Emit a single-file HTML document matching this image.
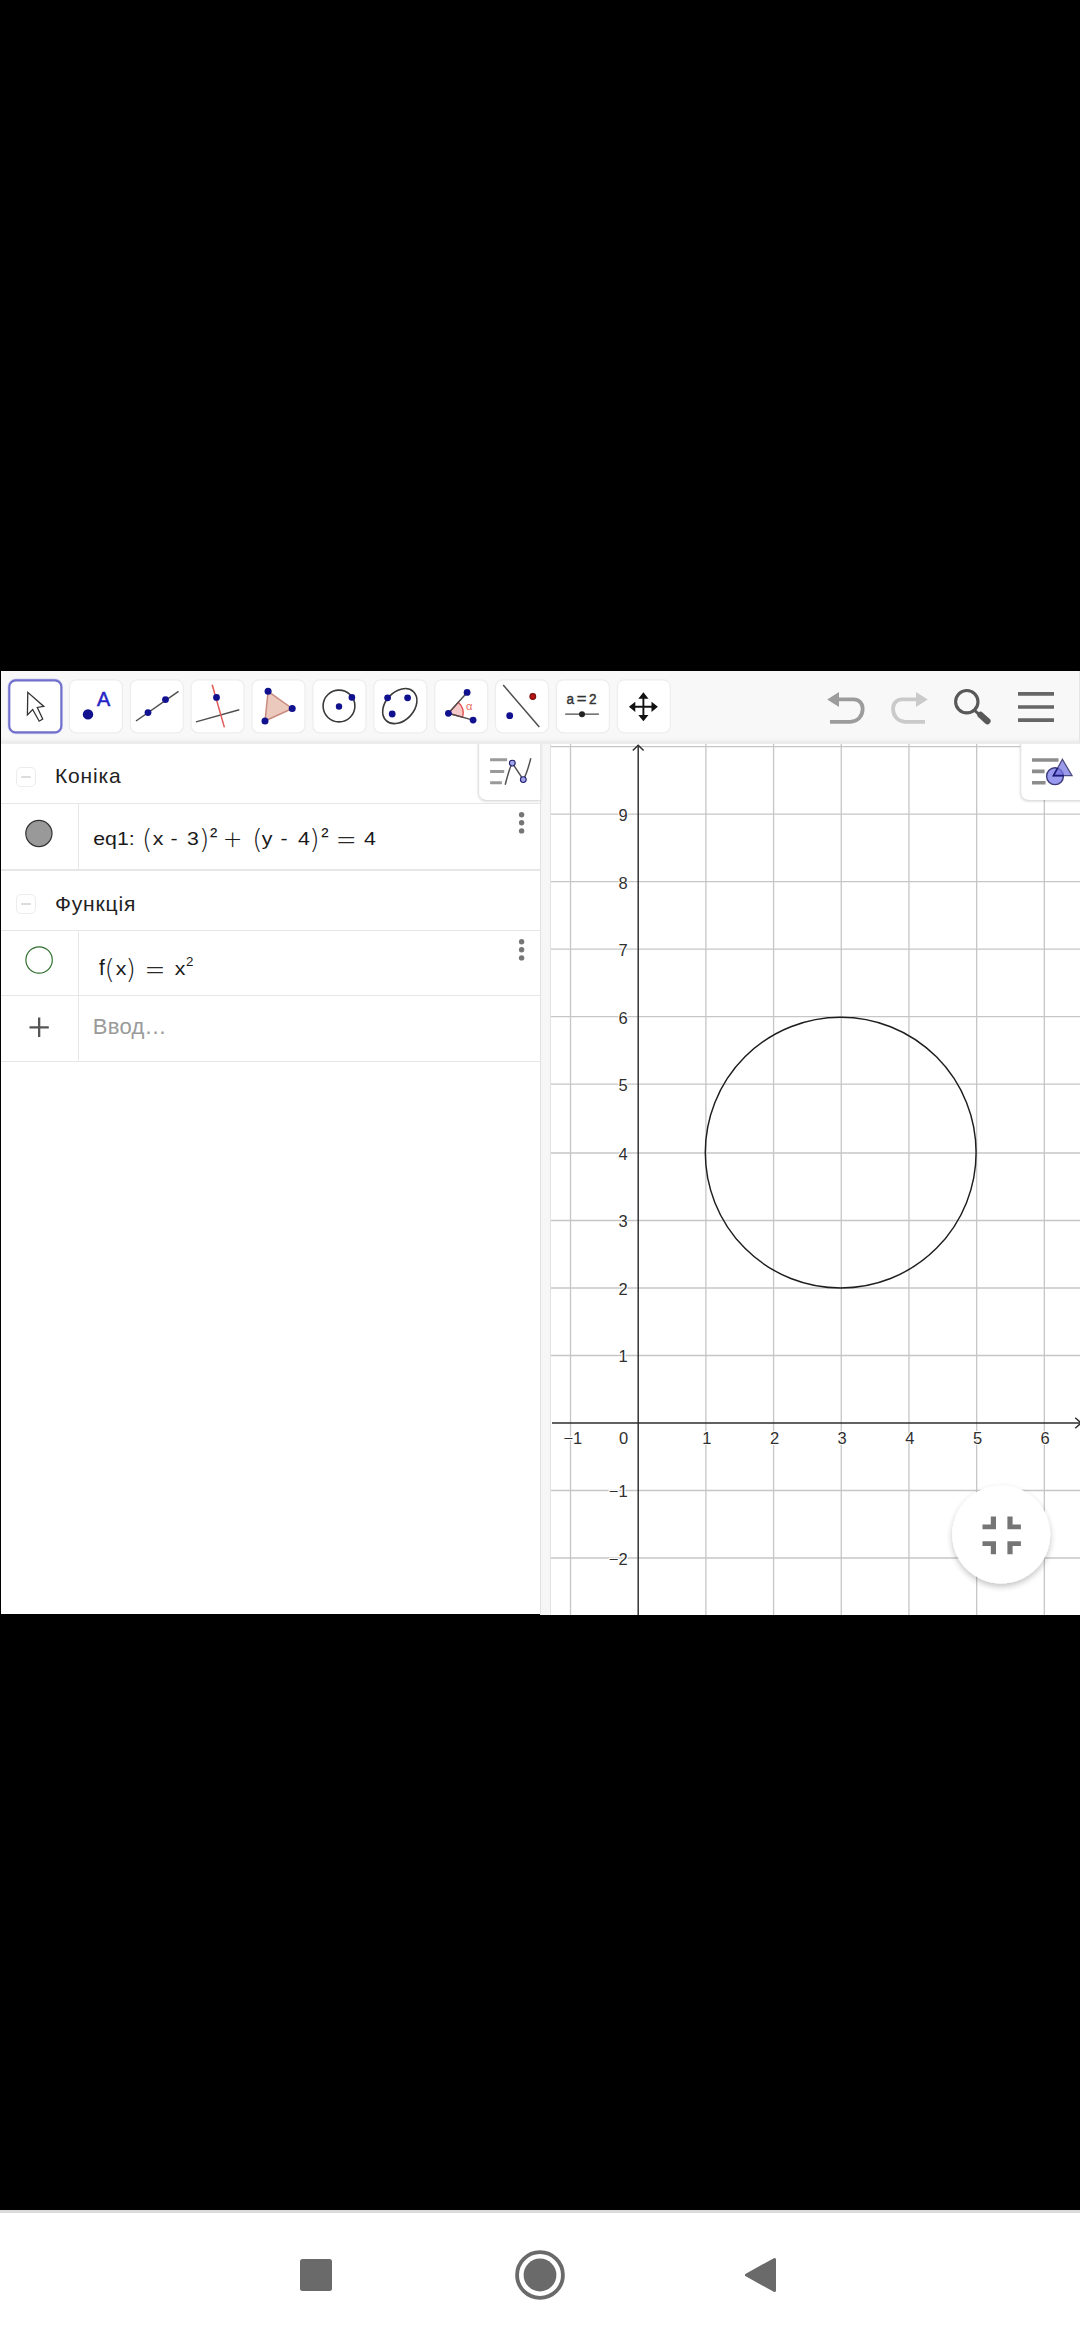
<!DOCTYPE html>
<html lang="uk">
<head>
<meta charset="utf-8">
<title>GeoGebra</title>
<style>
*{box-sizing:border-box;margin:0;padding:0}
html,body{width:1080px;height:2340px;background:#000;overflow:hidden}
body{position:relative;font-family:"Liberation Sans",sans-serif;color:#222}
.abs{position:absolute}
.hdr{position:absolute;left:54.9px;font-size:21px;letter-spacing:0.85px;color:#222;white-space:nowrap;line-height:24px}
.cbox{position:absolute;left:15.6px;width:20px;height:20px;border:1px solid #ececec;border-radius:5px;background:#fff}
.cbox i{position:absolute;left:4px;top:8px;width:10px;height:2px;background:#dcdcdc;border-radius:1px}
.eq{position:absolute;left:0;font-size:19.2px;line-height:24px;height:24px;color:#1a1a1a;white-space:nowrap}
.eq span{position:absolute;top:0;white-space:nowrap;transform:translateX(-50%) scaleX(1.11)}
.eq span.sup{font-size:22px;line-height:22px;top:-1.9px;transform:translateX(-50%)}
.eq span.sup2{font-size:13.3px;line-height:14px;top:-2.2px;transform:translateX(-50%)}
.eq span.par{font-family:"DejaVu Sans Light","DejaVu Sans",sans-serif;font-weight:200;font-size:26.6px;line-height:26.6px;top:-1.3px;transform:translateX(-50%)}
.eq span.plus{font-family:"DejaVu Sans Light","DejaVu Sans",sans-serif;font-weight:200;font-size:23.5px;line-height:23.5px;top:0.7px;transform:translateX(-50%)}
.eq span.eqs{font-family:"DejaVu Sans Light","DejaVu Sans",sans-serif;font-weight:200;font-size:25px;line-height:25px;top:-0.5px;color:#2a2a2a;transform:translateX(-50%) scaleY(1.32)}
svg{position:absolute;left:0;top:0;overflow:visible}
svg text{font-family:"Liberation Sans",sans-serif}
.lab{font-size:16.5px;fill:#303030;stroke:#fff;stroke-width:2.2px;paint-order:stroke;stroke-linejoin:round}
</style>
</head>
<body>
<div class="abs" style="left:1px;top:671px;width:1079px;height:73px;background:linear-gradient(#f8f8f8 0,#f8f8f8 66px,#f4f4f4 69px,#ececec 70.5px,#ececec 73px)"></div>
<div class="abs" style="left:1079px;top:671px;width:1px;height:72px;background:#e6e6e6"></div>
<div class="abs" style="left:1px;top:744px;width:539px;height:870px;background:#fff"></div>
<div class="abs" style="left:540px;top:744px;width:11px;height:871px;background:#f6f6f6;border-left:1.2px solid #e2e2e2;border-right:1.2px solid #e2e2e2"></div>
<div class="abs" style="left:1px;top:802.8px;width:539px;height:1.3px;background:#e7e7e7"></div>
<div class="abs" style="left:1px;top:869.3px;width:539px;height:1.3px;background:#e7e7e7"></div>
<div class="abs" style="left:1px;top:930.2px;width:539px;height:1.3px;background:#e7e7e7"></div>
<div class="abs" style="left:1px;top:994.8px;width:539px;height:1.3px;background:#e7e7e7"></div>
<div class="abs" style="left:1px;top:1061.2px;width:539px;height:1.3px;background:#e7e7e7"></div>
<div class="abs" style="left:77.8px;top:803.0px;width:1.3px;height:66.5px;background:#e7e7e7"></div>
<div class="abs" style="left:77.8px;top:930.5px;width:1.3px;height:130.9px;background:#e7e7e7"></div>
<div class="cbox" style="top:766.6px"><i></i></div>
<div class="hdr" style="top:763.9px">Коніка</div>
<div class="cbox" style="top:894.3px"><i></i></div>
<div class="hdr" style="top:892.0px">Функція</div>
<svg width="1080" height="2340" viewBox="0 0 1080 2340">
<circle cx="38.9" cy="833.5" r="13.1" fill="#999" stroke="#333" stroke-width="1.2"/>
<circle cx="39.1" cy="960" r="13.2" fill="#fff" stroke="#2f6f2f" stroke-width="1.2"/>
<path d="M29.5 1027.3 H48.8 M39.15 1017.6 V1037" stroke="#555" stroke-width="2.3"/>
<circle cx="521.6" cy="814.7" r="2.7" fill="#767676"/>
<circle cx="521.6" cy="822.8" r="2.7" fill="#767676"/>
<circle cx="521.6" cy="830.9" r="2.7" fill="#767676"/>
<circle cx="521.6" cy="941.7" r="2.7" fill="#767676"/>
<circle cx="521.6" cy="949.8" r="2.7" fill="#767676"/>
<circle cx="521.6" cy="957.9" r="2.7" fill="#767676"/>
</svg>
<div class="eq" style="top:827px"><span style="left:113.6px;">eq1:</span> <span class="par" style="left:147.1px;">(</span><span style="left:157.5px;">x</span> <span style="left:173.8px;">-</span> <span style="left:193.3px;">3</span><span class="par" style="left:204.2px;">)</span><span class="sup" style="left:213.7px;">²</span> <span class="plus" style="left:232.6px;">+</span> <span class="par" style="left:257.5px;">(</span><span style="left:267.4px;">y</span> <span style="left:284.0px;">-</span> <span style="left:304.0px;">4</span><span class="par" style="left:314.5px;">)</span><span class="sup" style="left:324.8px;">²</span> <span class="eqs" style="left:346.3px;">=</span> <span style="left:369.8px;">4</span></div>
<div class="eq" style="top:957.4px"><span style="left:102.0px;font-size:22px;top:-1px;transform:translateX(-50%) scaleX(0.95);">f</span><span class="par" style="left:109.6px;">(</span><span style="left:120.5px;">x</span><span class="par" style="left:130.8px;">)</span> <span class="eqs" style="left:155.1px;">=</span> <span style="left:179.7px;">x</span><span class="sup2" style="left:189.6px;">2</span></div>
<div class="abs" style="left:92.8px;top:1014.3px;font-size:22px;letter-spacing:0.25px;line-height:26px;color:#9a9a9a;white-space:nowrap">Ввод…</div>
<svg width="1080" height="2340" viewBox="0 0 1080 2340">
<defs><clipPath id="gc"><rect x="551" y="744" width="529" height="871"/></clipPath></defs>
<g clip-path="url(#gc)">
<rect x="551" y="744" width="529" height="871" fill="#fff"/>
<path d="M570.51 744 V1615 M705.89 744 V1615 M773.58 744 V1615 M841.27 744 V1615 M908.96 744 V1615 M976.65 744 V1615 M1044.34 744 V1615 M551 1558.02 H1080 M551 1490.52 H1080 M551 1355.52 H1080 M551 1288.02 H1080 M551 1220.52 H1080 M551 1153.02 H1080 M551 1084.17 H1080 M551 1016.67 H1080 M551 949.17 H1080 M551 881.67 H1080 M551 814.17 H1080 M551 746.67 H1080" stroke="#c6c6c6" stroke-width="1.3" fill="none"/>
<path d="M638.2 1615 V745 M552 1423.0 H1080" stroke="#2e2e2e" stroke-width="1.45" fill="none"/>
<path d="M632.8 750.6 L638.2 745.2 L643.6 750.6" stroke="#2e2e2e" stroke-width="1.45" fill="none"/>
<path d="M1075.2 1417.8 L1081.2 1423.0 L1075.2 1428.3" stroke="#2e2e2e" stroke-width="1.45" fill="none"/>
<circle cx="840.7" cy="1152.6" r="135.4" fill="none" stroke="#1e1e1e" stroke-width="1.45"/>
<text class="lab" x="627.6" y="1564.9" text-anchor="end">−2</text>
<text class="lab" x="627.6" y="1497.4" text-anchor="end">−1</text>
<text class="lab" x="627.6" y="1362.4" text-anchor="end">1</text>
<text class="lab" x="627.6" y="1294.9" text-anchor="end">2</text>
<text class="lab" x="627.6" y="1227.4" text-anchor="end">3</text>
<text class="lab" x="627.6" y="1159.9" text-anchor="end">4</text>
<text class="lab" x="627.6" y="1091.1" text-anchor="end">5</text>
<text class="lab" x="627.6" y="1023.6" text-anchor="end">6</text>
<text class="lab" x="627.6" y="956.1" text-anchor="end">7</text>
<text class="lab" x="627.6" y="888.6" text-anchor="end">8</text>
<text class="lab" x="627.6" y="821.1" text-anchor="end">9</text>
<text class="lab" x="572.8" y="1444" text-anchor="middle">−1</text>
<text class="lab" x="623.5" y="1444" text-anchor="middle">0</text>
<text class="lab" x="706.8" y="1444" text-anchor="middle">1</text>
<text class="lab" x="774.5" y="1444" text-anchor="middle">2</text>
<text class="lab" x="842.2" y="1444" text-anchor="middle">3</text>
<text class="lab" x="909.9" y="1444" text-anchor="middle">4</text>
<text class="lab" x="977.6" y="1444" text-anchor="middle">5</text>
<text class="lab" x="1045.2" y="1444" text-anchor="middle">6</text>
</g>
</svg>
<svg width="1080" height="2340" viewBox="0 0 1080 2340">
<rect x="9.3" y="680.4" width="52" height="52" rx="6.5" fill="#fff" stroke="#a9a9ee" stroke-width="3.6" opacity="0.45"/>
<rect x="9.3" y="680.4" width="52" height="52" rx="6.5" fill="#fff" stroke="#7070cc" stroke-width="2.1"/>
<rect x="69.4" y="679.8" width="53" height="53" rx="7" fill="#fff" stroke="#ededed" stroke-width="1.2"/>
<rect x="130.3" y="679.8" width="53" height="53" rx="7" fill="#fff" stroke="#ededed" stroke-width="1.2"/>
<rect x="191.1" y="679.8" width="53" height="53" rx="7" fill="#fff" stroke="#ededed" stroke-width="1.2"/>
<rect x="252.0" y="679.8" width="53" height="53" rx="7" fill="#fff" stroke="#ededed" stroke-width="1.2"/>
<rect x="312.9" y="679.8" width="53" height="53" rx="7" fill="#fff" stroke="#ededed" stroke-width="1.2"/>
<rect x="373.8" y="679.8" width="53" height="53" rx="7" fill="#fff" stroke="#ededed" stroke-width="1.2"/>
<rect x="434.7" y="679.8" width="53" height="53" rx="7" fill="#fff" stroke="#ededed" stroke-width="1.2"/>
<rect x="495.5" y="679.8" width="53" height="53" rx="7" fill="#fff" stroke="#ededed" stroke-width="1.2"/>
<rect x="556.4" y="679.8" width="53" height="53" rx="7" fill="#fff" stroke="#ededed" stroke-width="1.2"/>
<rect x="617.3" y="679.8" width="53" height="53" rx="7" fill="#fff" stroke="#ededed" stroke-width="1.2"/>
<path d="M27.8 692.3 L27.4 714.9 L32.7 709.5 L39.2 721.2 L42.7 719 L37.3 707.4 L43.8 706.4 Z" fill="#fff" stroke="#333" stroke-width="1.3" stroke-linejoin="miter"/>
<circle cx="88.0" cy="714.4" r="5.2" fill="#11118f"/>
<text x="103.5" y="706.2" text-anchor="middle" font-size="19.8" fill="#2424c4" stroke="#2424c4" stroke-width="0.55">A</text>
<path d="M136 721 L178.5 691.3" stroke="#4e4e4e" stroke-width="1.5"/>
<circle cx="148.0" cy="712.6" r="3.4" fill="#11118f"/><circle cx="165.5" cy="699.6" r="3.4" fill="#11118f"/>
<path d="M196 721.9 L239.3 709.8" stroke="#4e4e4e" stroke-width="1.5"/>
<path d="M212.2 684.8 L224.4 727.4" stroke="#e15a5a" stroke-width="1.5"/>
<circle cx="216.5" cy="697.4" r="3.4" fill="#11118f"/>
<path d="M268.1 691.3 L292.2 708.5 L265 721 Z" fill="#ecc9bd" stroke="#c98b80" stroke-width="1.5"/>
<circle cx="268.1" cy="691.3" r="3.5" fill="#11118f"/><circle cx="292.2" cy="708.5" r="3.5" fill="#11118f"/><circle cx="265.0" cy="721.0" r="3.5" fill="#11118f"/>
<circle cx="339" cy="706" r="15.9" fill="none" stroke="#3a3a3a" stroke-width="1.6"/>
<circle cx="339.0" cy="706.5" r="3.2" fill="#11118f"/><circle cx="351.9" cy="697.4" r="3.3" fill="#11118f"/>
<ellipse cx="399.8" cy="706.1" rx="19.9" ry="14.3" transform="rotate(-47 399.8 706.1)" fill="none" stroke="#3a3a3a" stroke-width="1.6"/>
<circle cx="387.6" cy="697.8" r="3.4" fill="#11118f"/><circle cx="407.6" cy="697.8" r="3.4" fill="#11118f"/><circle cx="392.2" cy="714.0" r="3.4" fill="#11118f"/>
<path d="M448.4 713.3 L458.2 702.3 A14.7 14.7 0 0 1 462.6 717.2 Z" fill="#f7c9c9" stroke="#e24a4a" stroke-width="1.3"/>
<path d="M467.1 692.4 L448.4 713.3 L473.1 720.1" fill="none" stroke="#4e4e4e" stroke-width="1.5"/>
<circle cx="467.1" cy="692.4" r="3.4" fill="#11118f"/><circle cx="448.4" cy="713.3" r="3.4" fill="#11118f"/><circle cx="473.1" cy="720.1" r="3.4" fill="#11118f"/>
<text x="469.2" y="710.2" text-anchor="middle" font-size="11.2" fill="#e8705f">α</text>
<path d="M503.2 685 L539.3 727" stroke="#4e4e4e" stroke-width="1.5"/>
<circle cx="532.8" cy="696.5" r="2.9" fill="#b81414" stroke="#7a1010" stroke-width="1.1"/>
<circle cx="509.7" cy="715.7" r="3.4" fill="#11118f"/>
<text transform="translate(570.2 704.4) scale(0.88 1)" text-anchor="middle" font-size="15.4" fill="#333" stroke="#333" stroke-width="0.45">a</text>
<text transform="translate(581.7 704.4) scale(1.08 1)" text-anchor="middle" font-size="15.4" fill="#333" stroke="#333" stroke-width="0.45">=</text>
<text transform="translate(592.8 704.4) scale(0.88 1)" text-anchor="middle" font-size="15.4" fill="#333" stroke="#333" stroke-width="0.45">2</text>
<path d="M565.2 714.2 H598.9" stroke="#4a4a4a" stroke-width="1.3"/>
<circle cx="582" cy="714.2" r="3" fill="#222"/>
<path d="M643.4 696.8 V716.8 M633.4 706.8 H653.4" stroke="#111" stroke-width="1.9"/>
<path d="M643.4 692.3 l5.1 6.4 h-10.2 Z M643.4 721.3 l5.1 -6.4 h-10.2 Z M628.9 706.8 l6.4 5.1 v-10.2 Z M657.9 706.8 l-6.4 5.1 v-10.2 Z" fill="#111"/>
<path d="M837 699.3 H853.8 A8.8 8.8 0 0 1 862.6 708.1 V709.6 A12.2 12.2 0 0 1 850.4 721.8 H830" fill="none" stroke="#9c9c9c" stroke-width="3.8"/>
<path d="M827.2 699.5 L839 692 V707 Z" fill="#9c9c9c"/>
<path d="M918 699.3 H901.9 A8.8 8.8 0 0 0 893.1 708.1 V709.6 A12.2 12.2 0 0 0 905.3 721.8 H925" fill="none" stroke="#cacaca" stroke-width="3.8"/>
<path d="M927.8 699.5 L916 692 V707 Z" fill="#cacaca"/>
<circle cx="966.8" cy="701.7" r="11.2" fill="none" stroke="#585858" stroke-width="3.1"/>
<path d="M974.2 710 L979 714.3" stroke="#585858" stroke-width="3"/>
<path d="M980.6 715 L987.4 721.2" stroke="#585858" stroke-width="6.4" stroke-linecap="round"/>
<path d="M1018 693.8 H1054 M1018 707 H1054 M1018 720.1 H1054" stroke="#666" stroke-width="3.7"/>
</svg>

<div class="abs" style="left:0;top:2210px;width:1080px;height:130px;background:#fff;border-top:3px solid #dadada"></div>
<svg width="1080" height="2340" viewBox="0 0 1080 2340">
<defs><filter id="sh" x="-30%" y="-30%" width="160%" height="170%"><feGaussianBlur in="SourceAlpha" stdDeviation="1.5"/><feOffset dy="0.8"/><feComponentTransfer><feFuncA type="linear" slope="0.2"/></feComponentTransfer><feMerge><feMergeNode/><feMergeNode in="SourceGraphic"/></feMerge></filter><filter id="sh2" x="-30%" y="-30%" width="160%" height="170%"><feGaussianBlur in="SourceAlpha" stdDeviation="3"/><feOffset dy="2.5"/><feComponentTransfer><feFuncA type="linear" slope="0.24"/></feComponentTransfer><feMerge><feMergeNode/><feMergeNode in="SourceGraphic"/></feMerge></filter><clipPath id="ac"><rect x="0" y="744" width="1080" height="871"/></clipPath></defs>
<g clip-path="url(#ac)">
<path d="M478.5 738 H540.4 V800 H485.5 A7 7 0 0 1 478.5 793 Z" fill="#fff" filter="url(#sh)"/>
<path d="M478.6 744 V793 A7 7 0 0 0 485.6 800" fill="none" stroke="#dcdcdc" stroke-width="0.9"/>
<path d="M490.1 759.8 H507.1 M490.1 771.5 H504.2 M490.1 782.7 H501.9" stroke="#9a9a9a" stroke-width="3.1"/>
<path d="M505.2 784.8 C507.4 776 509.6 767.5 512.3 763.1 L523.3 779.6 C526.2 775 528.6 767 530.8 758.2" fill="none" stroke="#505050" stroke-width="1.45"/>
<circle cx="512.3" cy="763.1" r="2.9" fill="#a3a3e8" stroke="#20206e" stroke-width="1.1"/>
<circle cx="523.3" cy="779.6" r="2.9" fill="#a3a3e8" stroke="#20206e" stroke-width="1.1"/>
<path d="M1020.7 738 H1090 V800 H1027.7 A7 7 0 0 1 1020.7 793 Z" fill="#fff" filter="url(#sh)"/>
<path d="M1020.8 744 V793 A7 7 0 0 0 1027.8 800" fill="none" stroke="#dcdcdc" stroke-width="0.9"/>
<path d="M1032 760 H1058.5 M1032 771.4 H1044.6 M1032 782.8 H1045.6" stroke="#8c8c8c" stroke-width="3.6"/>
<circle cx="1055" cy="776.2" r="8.4" fill="#9a9aef" stroke="#3a3a7a" stroke-width="1.4"/>
<path d="M1062.4 759.4 L1053.4 775.6 H1072 Z" fill="#7474e0" fill-opacity="0.72" stroke="#505086" stroke-width="1.3" stroke-linejoin="miter"/>
<clipPath id="cc"><circle cx="1055" cy="776.2" r="9"/></clipPath>
<path d="M1062.4 759.4 L1053.4 775.6 H1072 Z" fill="none" stroke="#1c1c78" stroke-width="1.6" stroke-linejoin="miter" clip-path="url(#cc)"/>
<circle cx="1001.2" cy="1534.4" r="49" fill="#fff" filter="url(#sh2)"/>
<path d="M990.8 1516.4 h5.2 v12.8 h-13.5 v-4.7 h8.3 Z M1007.4 1516.4 h5.2 v8.1 h8.3 v4.7 h-13.5 Z M982.5 1541.3 h13.5 v12.9 h-5.2 v-8.2 h-8.3 Z M1007.4 1541.3 h13.5 v4.7 h-8.3 v8.2 h-5.2 Z" fill="#757575"/>
</g>
<rect x="300" y="2259" width="32" height="32" rx="2.5" fill="#6a6a6a"/>
<circle cx="540" cy="2275" r="22.9" fill="none" stroke="#6a6a6a" stroke-width="3.8"/>
<circle cx="540" cy="2275" r="16.4" fill="#6a6a6a"/>
<path d="M746.5 2275 L774.5 2259.5 V2290.5 Z" fill="#6a6a6a" stroke="#6a6a6a" stroke-width="3" stroke-linejoin="round"/>
</svg>
</body>
</html>
